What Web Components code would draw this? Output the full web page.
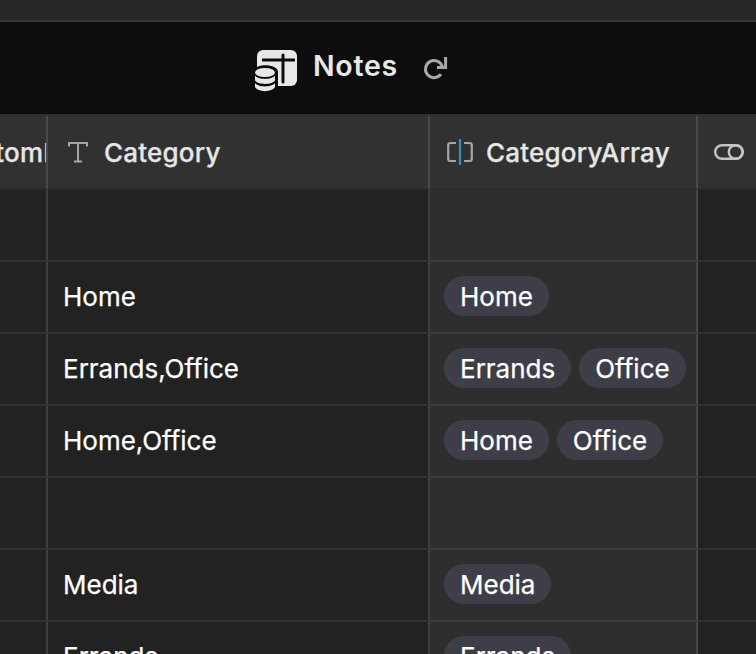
<!DOCTYPE html>
<html>
<head>
<meta charset="utf-8">
<title>Notes</title>
<style>
    html, body { margin: 0; padding: 0; background: #222; height: 654px; overflow: hidden; }
    body { font-family: Inter, "Noto Sans", sans-serif; color: #fff; }
</style>
</head>
<body>
<notes-app>
    <title-bar slot="title">Notes</title-bar>
    <data-grid>
        <grid-row header>
            <head-cell clip>CustomId</head-cell>
            <head-cell icon="text">Category</head-cell>
            <head-cell icon="array">CategoryArray</head-cell>
            <head-cell icon="toggle"></head-cell>
        </grid-row>
        <grid-row><text-cell></text-cell><text-cell></text-cell><text-cell tint></text-cell><text-cell></text-cell></grid-row>
        <grid-row><text-cell></text-cell><text-cell>Home</text-cell><text-cell tint><tag-pill>Home</tag-pill></text-cell><text-cell></text-cell></grid-row>
        <grid-row><text-cell></text-cell><text-cell>Errands,Office</text-cell><text-cell tint><tag-pill>Errands</tag-pill><tag-pill>Office</tag-pill></text-cell><text-cell></text-cell></grid-row>
        <grid-row><text-cell></text-cell><text-cell>Home,Office</text-cell><text-cell tint><tag-pill>Home</tag-pill><tag-pill>Office</tag-pill></text-cell><text-cell></text-cell></grid-row>
        <grid-row><text-cell></text-cell><text-cell></text-cell><text-cell tint></text-cell><text-cell></text-cell></grid-row>
        <grid-row><text-cell></text-cell><text-cell>Media</text-cell><text-cell tint><tag-pill>Media</tag-pill></text-cell><text-cell></text-cell></grid-row>
        <grid-row><text-cell></text-cell><text-cell>Errands</text-cell><text-cell tint><tag-pill>Errands</tag-pill></text-cell><text-cell></text-cell></grid-row>
    </data-grid>
</notes-app>

<script>
// Small helper: each element gets an open shadow root from a string.
function shadow(el, html) {
    el.attachShadow({ mode: 'open' }).innerHTML = html;
}

class NotesApp extends HTMLElement {
    constructor() {
        super();
        shadow(this, `
            <style>
                :host { display: flex; flex-direction: column; height: 654px; overflow: hidden; }
                .strip { height: 20px; flex: none; background: #272727; border-bottom: 2px solid #363636; }
            </style>
            <div class="strip"></div>
            <slot name="title"></slot>
            <slot></slot>
        `);
    }
}

class TitleBar extends HTMLElement {
    constructor() {
        super();
        shadow(this, `
            <style>
                :host {
                    display: flex; align-items: center; justify-content: center;
                    height: 92px; flex: none; box-sizing: border-box;
                    background: #0d0d0d; padding-right: 52px;
                }
                .logo { width: 44px; height: 42px; margin-right: 14px; margin-top: 6px; overflow: visible; }
                .name { width: 85px; font-size: 28.5px; font-weight: 600; color: #e8e8e8; line-height: 34px; margin-top: -4px; letter-spacing: .7px; white-space: nowrap; }
                .reload { width: 26px; height: 26px; margin-left: 25px; }
            </style>
            <svg class="logo" viewBox="0 0 44 42">
                <rect x="2" y="0" width="40" height="36" rx="6" fill="#e8e8e8"/>
                <path d="M7 10H40" stroke="#0d0d0d" stroke-width="3" fill="none"/>
                <path d="M28 5V32" stroke="#0d0d0d" stroke-width="3" stroke-linecap="round" fill="none"/>
                <path d="M-2 22C-2 13 23 13 23 22V44H-2Z" fill="#0d0d0d"/>
                <ellipse cx="10" cy="22.5" rx="10" ry="4.5" fill="#e8e8e8"/>
                <path d="M0 25.5C3 30 17 30 20 25.5V30.5C17 35 3 35 0 30.5Z" fill="#e8e8e8"/>
                <path d="M0 33C3 37.5 17 37.5 20 33V37C17 42.5 3 42.5 0 37Z" fill="#e8e8e8"/>
            </svg>
            <span class="name"><slot></slot></span>
            <svg class="reload" viewBox="0 0 26 26" fill="none" stroke="#a8a8a8" stroke-width="3">
                <path d="M19.3 11.5A8.6 8.6 0 1 0 18 19.2"/>
                <path d="M22.6 2V12.6H14"/>
            </svg>
        `);
    }
}

class DataGrid extends HTMLElement {
    constructor() {
        super();
        shadow(this, `
            <style>
                :host { display: flex; flex-direction: column; flex: 1; min-height: 0; overflow: hidden; border-top: 2px solid #2e2e2e; }
            </style>
            <slot></slot>
        `);
    }
}

class GridRow extends HTMLElement {
    constructor() {
        super();
        shadow(this, `
            <style>
                :host {
                    display: grid; grid-template-columns: 48px 382px 268px 58px;
                    height: 72px; flex: none;
                }
                :host([header]) { height: 74px; background: #313131; }
            </style>
            <slot></slot>
        `);
    }
}

const headIcons = {
    text: `<svg width="26" height="24" viewBox="0 0 26 24" fill="none" stroke="#a6a6a6" stroke-width="2">
            <path d="M4 6.5V3H22V6.5M13 3V21M9 21.5H17"/></svg>`,
    array: `<svg width="26" height="28" viewBox="0 0 26 28" fill="none" stroke="#a6a6a6" stroke-width="2.2">
            <path d="M9 5H3.5Q1.2 5 1.2 7.3V20.7Q1.2 23 3.5 23H9M17 5H22.5Q24.8 5 24.8 7.3V20.7Q24.8 23 22.5 23H17"/>
            <path d="M13 1V27" stroke="#3a93ad"/></svg>`,
    toggle: `<svg width="30" height="16" viewBox="0 0 30 16" fill="none" stroke="#c4c4c4" stroke-width="2.4" style="margin-left:-1px">
            <rect x="1.2" y="1.2" width="27.6" height="13.6" rx="6.8"/><circle cx="21.6" cy="8" r="6.8"/></svg>`
};

class HeadCell extends HTMLElement {
    constructor() {
        super();
        const icon = headIcons[this.getAttribute('icon')] || '';
        shadow(this, `
            <style>
                :host {
                    display: flex; align-items: center; gap: 13px; box-sizing: border-box;
                    padding-left: 17px; overflow: hidden; white-space: nowrap;
                    border-right: 2px solid #4a4a4a; border-bottom: 2px solid #2b2b2b;
                    font-size: 26px; font-weight: 500; color: #e6e6e6; letter-spacing: .2px;
                    -webkit-text-stroke: .25px #e6e6e6;
                }
                :host([clip]) { padding-left: 0; }
                :host([clip]) .label { margin-left: -54px; }
                :host(:last-child) { border-right: 0; }
                svg { flex: none; }
            </style>
            ${icon}<span class="label"><slot></slot></span>
        `);
    }
}

class TextCell extends HTMLElement {
    constructor() {
        super();
        shadow(this, `
            <style>
                :host {
                    display: flex; align-items: center; gap: 8px; box-sizing: border-box;
                    padding: 0 0 2px 15px; overflow: hidden; white-space: nowrap;
                    border-right: 2px solid #3f3f3f; border-bottom: 2px solid #323232;
                    font-size: 26px; font-weight: 400; color: #fff;
                    -webkit-text-stroke: .25px #fff;
                }
                :host([tint]) { background: #2e2e2e; padding-left: 14px; border-right-color: #474747; border-bottom-color: #3a3a3a; }
                :host(:last-child) { border-right: 0; }
            </style>
            <slot></slot>
        `);
    }
}

class TagPill extends HTMLElement {
    constructor() {
        super();
        shadow(this, `
            <style>
                :host {
                    display: inline-flex; align-items: center; flex: none;
                    height: 40px; padding: 0 16px; box-sizing: border-box;
                    border-radius: 20px; background: #3d3e48; color: #fff;
                }
            </style>
            <slot></slot>
        `);
    }
}

customElements.define('notes-app', NotesApp);
customElements.define('title-bar', TitleBar);
customElements.define('data-grid', DataGrid);
customElements.define('grid-row', GridRow);
customElements.define('head-cell', HeadCell);
customElements.define('text-cell', TextCell);
customElements.define('tag-pill', TagPill);
</script>
</body>
</html>
